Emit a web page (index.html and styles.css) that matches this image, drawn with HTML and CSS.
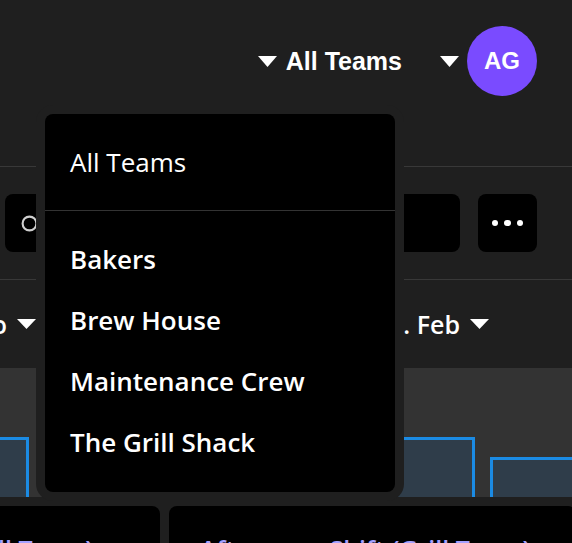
FILE: index.html
```html
<!DOCTYPE html>
<html lang="de">
<head>
<meta charset="utf-8">
<title>Teams</title>
<link rel="stylesheet" href="styles.css">
</head>
<body>
<div class="page">
  <header class="topbar">
    <button class="team-select">
      <svg class="caret-lg" viewBox="0 0 19 11"><polygon points="0,0 19,0 9.5,11"/></svg>
      <span>All Teams</span>
    </button>
    <button class="user-menu">
      <svg class="caret-lg" viewBox="0 0 19 11"><polygon points="0,0 19,0 9.5,11"/></svg>
      <span class="avatar">AG</span>
    </button>
  </header>

  <div class="toolbar">
    <div class="search">
      <svg class="search-icon" viewBox="0 0 16 16"><circle cx="8" cy="8" r="6.5" fill="none" stroke="#cfcfcf" stroke-width="2"/></svg>
      <span class="search-text">Suchen</span>
    </div>
    <button class="more">
      <span class="dot"></span><span class="dot"></span><span class="dot"></span>
    </button>
  </div>

  <div class="filters">
    <div class="filter-left">
      <button class="filter">Brutto
        <svg class="caret-sm" viewBox="0 0 19 10"><polygon points="0,0 19,0 9.5,10"/></svg>
      </button>
    </div>
    <button class="filter filter-right">1. Jan – 28. Feb
      <svg class="caret-sm" viewBox="0 0 19 10"><polygon points="0,0 19,0 9.5,10"/></svg>
    </button>
  </div>

  <div class="chart">
    <div class="bar" style="height:60px"></div>
    <div class="bar" style="height:82px"></div>
    <div class="bar" style="height:50px"></div>
    <div class="bar" style="height:60px"></div>
    <div class="bar" style="height:40px"></div>
  </div>

  <div class="cards">
    <a class="card">Morning Shift (Grill Team)</a>
    <a class="card">Afternoon Shift (Grill Team)</a>
  </div>
</div>

<div class="dropdown">
  <div class="dropdown-all">All Teams</div>
  <ul class="dropdown-list">
    <li>Bakers</li>
    <li>Brew House</li>
    <li>Maintenance Crew</li>
    <li>The Grill Shack</li>
  </ul>
</div>
</body>
</html>
```

FILE: styles.css
```css
* { box-sizing: border-box; }

html, body {
  margin: 0;
  padding: 0;
}

body {
  width: 572px;
  height: 543px;
  overflow: hidden;
  position: relative;
  background: #1f1f1f;
  color: #ffffff;
  font-family: "Open Sans", sans-serif;
}

button {
  font: inherit;
  color: inherit;
  background: none;
  border: 0;
  padding: 0;
  margin: 0;
}

.caret-lg { width: 19px; height: 11px; fill: #ffffff; flex: none; }
.caret-sm { width: 19px; height: 10px; fill: #ffffff; flex: none; }

/* Top bar */
.topbar {
  height: 167px;
  border-bottom: 1px solid #383838;
  display: flex;
  justify-content: flex-end;
  align-items: flex-start;
  padding: 26px 35px 0 0;
}

.team-select {
  display: flex;
  align-items: center;
  gap: 9px;
  height: 70px;
  margin-right: 38px;
  font: 700 25px "Liberation Sans", Arial, sans-serif;
}

.user-menu {
  display: flex;
  align-items: center;
  gap: 8px;
  height: 70px;
}

.avatar {
  width: 70px;
  height: 70px;
  border-radius: 50%;
  background: #7a4bff;
  display: flex;
  align-items: center;
  justify-content: center;
  font: 700 24px "Liberation Sans", Arial, sans-serif;
  color: #ffffff;
}

/* Toolbar */
.toolbar {
  height: 113px;
  border-bottom: 1px solid #383838;
  display: flex;
  align-items: center;
  gap: 18px;
  padding: 0 35px 0 5px;
}

.search {
  flex: 1;
  height: 58px;
  background: #000000;
  border-radius: 8px;
  display: flex;
  align-items: center;
  gap: 12px;
  padding-left: 16px;
}

.search-icon { width: 17px; height: 17px; flex: none; }

.search-text {
  font-size: 20px;
  color: #8a8a8a;
}

.more {
  width: 59px;
  height: 58px;
  background: #000000;
  border-radius: 8px;
  display: flex;
  align-items: center;
  justify-content: center;
  gap: 6px;
}

.dot {
  width: 6.5px;
  height: 6.5px;
  border-radius: 50%;
  background: #ffffff;
}

/* Filters */
.filters {
  height: 88px;
  display: flex;
  align-items: center;
  padding-right: 83px;
}

.filter-left {
  width: 36px;
  display: flex;
  justify-content: flex-end;
}

.filter {
  display: flex;
  align-items: center;
  gap: 10px;
  white-space: nowrap;
  font-size: 25px;
  font-weight: 600;
  flex: none;
}

.filter-right { margin-left: auto; }

/* Chart */
.chart {
  height: 129px;
  background: #333333;
  overflow: hidden;
  display: flex;
  align-items: flex-end;
  gap: 15px;
}

.bar {
  flex: none;
  width: 133.67px;
  background: #2f3d4a;
  border: 3px solid #1b8be4;
  border-bottom: 0;
}

.bar:first-child { margin-left: -104.67px; }

/* Cards */
.cards {
  display: flex;
  gap: 9px;
  margin-top: 9px;
  margin-left: -247px;
}

.card {
  flex: none;
  width: 407px;
  height: 100px;
  background: #000000;
  border-radius: 8px;
  padding: 28px 31px;
  font-size: 25px;
  font-weight: 600;
  line-height: 30px;
  color: #a4a0ff;
  white-space: nowrap;
}

/* Dropdown overlay */
.dropdown {
  position: absolute;
  left: 45px;
  top: 114px;
  width: 350px;
  height: 378px;
  background: #000000;
  border-radius: 8px;
  box-shadow: 0 0 0 9px #1f1f1f;
}

.dropdown-all {
  height: 97px;
  border-bottom: 1px solid #333333;
  display: flex;
  align-items: center;
  padding-left: 25px;
  font-size: 26px;
  font-weight: 400;
}

.dropdown-list {
  list-style: none;
  margin: 0;
  padding: 18px 0 19px 25px;
}

.dropdown-list li {
  line-height: 61px;
  font-size: 26px;
  font-weight: 600;
}
```
